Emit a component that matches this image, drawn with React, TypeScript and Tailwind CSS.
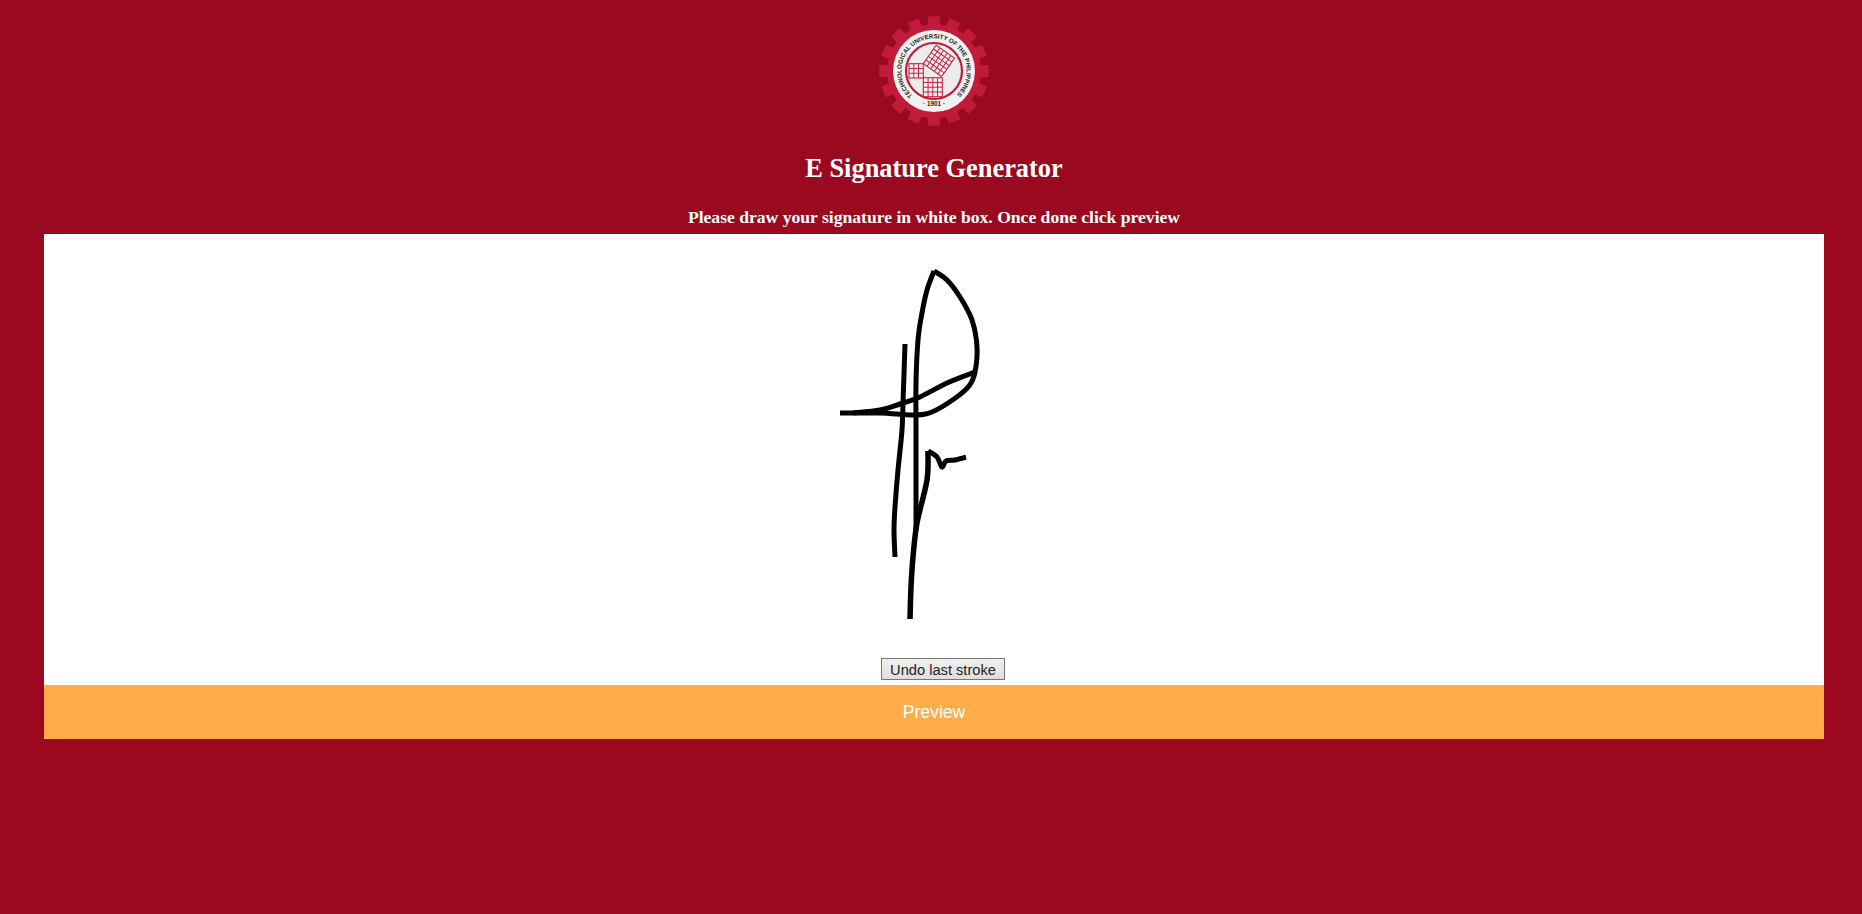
type P = [number, number];

const gearPath = (() => {
  const cx = 75, cy = 75, teeth = 16, ro = 55, ri = 46.5;
  const pts: string[] = [];
  for (let i = 0; i < teeth; i++) {
    const a = (i / teeth) * Math.PI * 2 - Math.PI / 2;
    const s = (Math.PI * 2) / teeth;
    const at = (r: number, d: number) => {
      const t = a + d * s;
      return `${(cx + r * Math.cos(t)).toFixed(2)} ${(cy + r * Math.sin(t)).toFixed(2)}`;
    };
    pts.push(`${i === 0 ? "M" : "L"}${at(ri, -0.34)}`, `L${at(ro, -0.27)}`, `L${at(ro, 0.27)}`, `L${at(ri, 0.34)}`);
  }
  return pts.join(" ") + " Z";
})();

function smooth(points: P[]) {
  let d = `M${points[0][0]} ${points[0][1]}`;
  for (let i = 0; i < points.length - 1; i++) {
    const p0 = points[Math.max(i - 1, 0)];
    const p1 = points[i];
    const p2 = points[i + 1];
    const p3 = points[Math.min(i + 2, points.length - 1)];
    const c1: P = [p1[0] + (p2[0] - p0[0]) / 6, p1[1] + (p2[1] - p0[1]) / 6];
    const c2: P = [p2[0] - (p3[0] - p1[0]) / 6, p2[1] - (p3[1] - p1[1]) / 6];
    d += ` C${c1[0].toFixed(1)} ${c1[1].toFixed(1)} ${c2[0].toFixed(1)} ${c2[1].toFixed(1)} ${p2[0]} ${p2[1]}`;
  }
  return d;
}

function Grid({ x, y, size, n, rot = 0 }: { x: number; y: number; size: number; n: number; rot?: number }) {
  const lines = [];
  for (let i = 1; i < n; i++) {
    const p = (i / n) * size;
    lines.push(<line key={`v${i}`} x1={p} y1={0} x2={p} y2={size} />);
    lines.push(<line key={`h${i}`} x1={0} y1={p} x2={size} y2={p} />);
  }
  return (
    <g transform={`translate(${x} ${y}) rotate(${rot})`} stroke="#c8203f" strokeWidth="1" fill="#f6eef0">
      <rect width={size} height={size} strokeWidth="1.1" />
      {lines}
    </g>
  );
}

function Logo() {
  return (
    <svg width="120" height="120" viewBox="15 15 120 120" className="block">
      <path d={gearPath} fill="#c11a3a" />
      <circle cx="75" cy="75" r="47" fill="#c11a3a" />
      <circle cx="75" cy="75" r="41" fill="#f2f1f1" />
      <circle cx="75" cy="75" r="28" fill="#ececec" stroke="#c11a3a" strokeWidth="2.2" />
      <defs>
        <path id="ring" d="M 53.6 99.6 A 32.6 32.6 0 1 1 96.4 99.6" />
      </defs>
      <text fontFamily="'Liberation Sans', Arial, sans-serif" fontSize="6.2" fontWeight="700" fill="#1c1c1c">
        <textPath href="#ring" textLength="156" lengthAdjust="spacingAndGlyphs">TECHNOLOGICAL UNIVERSITY OF THE PHILIPPINES</textPath>
      </text>
      <text x="75" y="110" textAnchor="middle" fontFamily="'Liberation Sans', Arial, sans-serif" fontSize="6.4" fontWeight="700" fill="#1c1c1c">· 1901 ·</text>
      <Grid x={50} y={67.7} size={14.3} n={3} />
      <Grid x={64.3} y={81.7} size={19} n={4} />
      <Grid x={64.3} y={67.7} size={22.4} n={5} rot={-55} />
    </svg>
  );
}

function Signature() {
  const stem: P[] = [[934, 271], [927, 290], [922, 313], [918, 340], [916, 383], [916, 430], [916, 480], [916, 530]];
  const bowl: P[] = [[934, 271], [947, 280], [960, 297], [972, 320], [977, 347], [975, 372], [969, 386], [954, 399], [932, 412], [913, 415], [880, 413], [840, 413]];
  const cross: P[] = [[975, 372], [947, 383], [920, 397], [900, 404], [880, 410], [853, 413]];
  const vertical: P[] = [[905, 344], [903, 403], [902, 430], [898, 470], [895, 507], [894, 530], [895, 557]];
  const tailA: P[] = [[910, 619], [911, 587], [913, 557], [917, 523], [927, 480], [928, 451]];
  const tailB: P[] = [[928, 451], [937, 457], [942, 467], [946, 461], [955, 460], [966, 457]];
  return (
    <svg width="1780" height="414" viewBox="44 234 1780 414" className="block" fill="none" stroke="#000" strokeWidth="5" strokeLinejoin="round">
      <path d={smooth(stem)} />
      <path d={smooth(bowl)} />
      <path d={smooth(cross)} />
      <path d={smooth(vertical)} />
      <path d={smooth(tailA)} strokeWidth="5.5" />
      <path d={smooth(tailB)} />
    </svg>
  );
}

export default function App() {
  return (
    <div className="min-h-[914px] bg-[#9b0920] pl-[44px] pr-[38px] font-['Liberation_Serif',serif] text-white">
      <div className="flex justify-center pt-[11px] h-[153px]">
        <Logo />
      </div>
      <h3 className="text-center text-[26.4px] leading-[30px] font-bold">E Signature Generator</h3>
      <p className="text-center text-[17.6px] leading-[20px] font-bold pt-[24px] pb-[7px]">Please draw your signature in white box. Once done click preview</p>
      <div className="bg-white h-[451px]">
        <Signature />
        <div className="flex justify-center pl-[18px] pt-[10px]">
          <button className="h-[22px] w-[124px] border border-[#767676] bg-gradient-to-b from-[#f0f0f0] to-[#dedede] font-['Liberation_Sans',Arial,sans-serif] text-[14.67px] text-[#222]">
            Undo last stroke
          </button>
        </div>
      </div>
      <div className="h-[54px] bg-[#ffad49] flex items-center justify-center font-['Liberation_Sans',Arial,sans-serif] text-[17.6px]">
        Preview
      </div>
    </div>
  );
}
